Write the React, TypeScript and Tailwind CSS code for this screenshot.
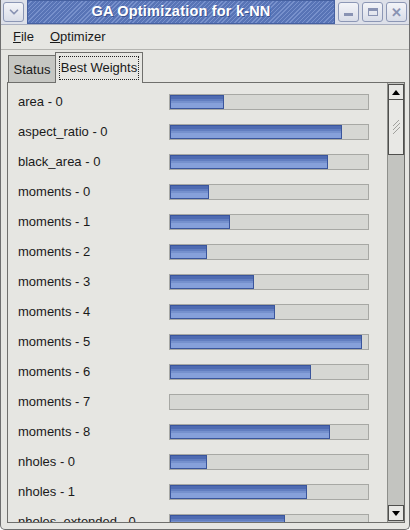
import { ChevronDown } from 'lucide-react';

// pesos del mejor individuo, ancho del relleno en px (pista de 198px)
const weights: { name: string; fill: number }[] = [
  { name: 'area - 0', fill: 54 },
  { name: 'aspect_ratio - 0', fill: 172 },
  { name: 'black_area - 0', fill: 158 },
  { name: 'moments - 0', fill: 39 },
  { name: 'moments - 1', fill: 60 },
  { name: 'moments - 2', fill: 37 },
  { name: 'moments - 3', fill: 84 },
  { name: 'moments - 4', fill: 105 },
  { name: 'moments - 5', fill: 192 },
  { name: 'moments - 6', fill: 141 },
  { name: 'moments - 7', fill: 0 },
  { name: 'moments - 8', fill: 160 },
  { name: 'nholes - 0', fill: 37 },
  { name: 'nholes - 1', fill: 137 },
  { name: 'nholes_extended - 0', fill: 115 },
];

function TitleButton({ children }: { children: React.ReactNode }) {
  return (
    <div className="w-[21px] h-[20px] flex items-center justify-center rounded-[3px] border border-[#8c97b5] bg-[linear-gradient(#f3f4f8,#d9dde8)] text-[#8993b3]">
      {children}
    </div>
  );
}

function Bar({ fill }: { fill: number }) {
  return (
    <div className="w-[200px] h-[16px] border border-[#a7a8a4] bg-[#d6d7d3]">
      {fill > 0 && (
        <div
          className="h-[14px] border border-[#3a559c] bg-[linear-gradient(#4f6bb2_0%,#4f6bb2_25%,#627ec0_25%,#627ec0_40%,#7590cd_40%,#7590cd_55%,#86a0da_55%,#86a0da_100%)]"
          style={{ width: fill }}
        />
      )}
    </div>
  );
}

export default function App() {
  return (
    <div className="w-[410px] h-[530px] flex flex-col overflow-hidden bg-[#e6e6e2] border-x border-b border-[#6e6e6e] rounded-b-[5px] font-['Liberation_Sans',Arial,sans-serif] text-[#1a1a1a]">
      {/* barra de título */}
      <div className="flex-none h-[25px] flex items-center gap-[3px] px-[2px] bg-[#dde0e9] border-b border-[#a9afc0]">
        <TitleButton>
          <ChevronDown className="w-[14px] h-[14px]" strokeWidth={3} />
        </TitleButton>
        <div className="flex-1 h-[24px] -mt-px flex items-center justify-center border border-[#4560a0] bg-[repeating-linear-gradient(135deg,#5874b6_0px,#5874b6_2px,#7891cc_2px,#7891cc_3px)]">
          <span className="text-[14.5px] font-bold text-white tracking-[0.2px] [text-shadow:1px_1px_0_#3a5290]">GA Optimization for k-NN</span>
        </div>
        <TitleButton>
          <div className="w-[9px] h-[3px] mt-[5px] bg-[#8993b3]" />
        </TitleButton>
        <TitleButton>
          <div className="w-[10px] h-[8px] border border-t-[3px] border-[#8993b3]" />
        </TitleButton>
        <TitleButton>
          <span className="text-[13px] font-bold leading-none">✕</span>
        </TitleButton>
      </div>

      {/* menú */}
      <div className="flex-none h-[25px] flex items-center gap-[16px] pl-[12px] text-[13px] border-b border-[#b4b4b0]">
        <span><span className="underline">F</span>ile</span>
        <span><span className="underline">O</span>ptimizer</span>
      </div>

      {/* pestañas */}
      <div className="flex-none h-[31px] flex items-end pl-[7px] mt-px">
        <div className="h-[27px] w-[47px] flex items-center justify-center text-[13px] bg-[#c6c7c3] border-t border-l border-[#6f6f6c] pt-[2px]">
          Status
        </div>
        <div className="h-[31px] w-[88px] p-[3px] bg-[#e6e6e2] border-t border-x border-[#6f6f6c] relative -mb-px z-10">
          <div className="h-full flex items-center justify-center text-[13px] border border-dotted border-[#222]">
            Best Weights
          </div>
        </div>
      </div>

      {/* panel */}
      <div className="flex-1 ml-[6px] w-[398px] mb-[6px] flex border border-[#6f6f6c] overflow-hidden">
        <div className="flex-1 pt-[4px] pl-[10px] overflow-hidden">
          {weights.map((w) => (
            <div key={w.name} className="h-[30px] flex items-center">
              <span className="w-[151px] text-[13px] whitespace-nowrap">{w.name}</span>
              <Bar fill={w.fill} />
            </div>
          ))}
        </div>

        {/* scrollbar */}
        <div className="w-[17px] flex-none flex flex-col border-l border-[#8e8f8b] bg-[#c3c4c0] py-px">
          <div className="h-[16px] flex-none flex items-center justify-center border border-[#4f4f4d] bg-[#e8e8e5]">
            <div className="w-0 h-0 border-x-[4px] border-x-transparent border-b-[5px] border-b-black" />
          </div>
          <div className="h-[55px] flex-none flex items-center justify-center border border-[#4f4f4d] border-t-0 bg-[#e8e8e5]">
            <svg width="9" height="14" viewBox="0 0 9 14">
              <path d="M1 6 L7 0 M1 10 L8 3 M1 14 L8 7" stroke="#a0a19d" strokeWidth="1" />
            </svg>
          </div>
          <div className="flex-1" />
          <div className="h-[16px] flex-none flex items-center justify-center border border-[#4f4f4d] bg-[#e8e8e5]">
            <div className="w-0 h-0 border-x-[4px] border-x-transparent border-t-[5px] border-t-black" />
          </div>
        </div>
      </div>
    </div>
  );
}
